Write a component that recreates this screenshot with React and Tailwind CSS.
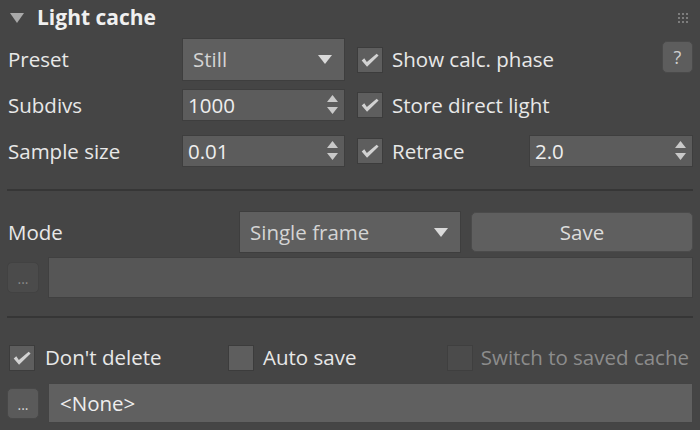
import React from "react"

// small pieces reused across the rollout
function Check({ checked = false, disabled = false }) {
    return (
        <div className={`w-[26px] h-[26px] shrink-0 flex items-center justify-center border ${disabled ? "bg-[#4b4b4b] border-[#3f3f3f]" : "bg-[#5e5e5e] border-[#3c3c3c]"}`}>
            {checked && (
                <svg width="26" height="26" viewBox="0 0 26 26">
                    <path d="M4 13.5 L6.8 11.2 L9.6 15.2 L20.2 6.2 L22.3 8.2 L9.8 20.2 Z" fill="#d2d2d2" />
                </svg>
            )}
        </div>
    )
}

function Spinner({ value, className }) {
    return (
        <div className={`flex items-center justify-between bg-[#5c5c5c] border border-[#3e3e3e] pl-[5px] pr-[6px] text-[#eeeeee] ${className}`}>
            <span>{value}</span>
            <svg width="11" height="20" viewBox="0 0 11 20">
                <path d="M5.5 0 L11 7 L0 7 Z" fill="#c9c9c9" />
                <path d="M0 12 L11 12 L5.5 19 Z" fill="#c9c9c9" />
            </svg>
        </div>
    )
}

function Dropdown({ value, className }) {
    return (
        <div className={`flex items-center justify-between bg-[#5f5f5f] border border-[#3e3e3e] pl-[10px] pr-[12px] text-[#d4d4d4] ${className}`}>
            <span>{value}</span>
            <svg width="14" height="9" viewBox="0 0 14 9">
                <path d="M0 0 L14 0 L7 9 Z" fill="#dadada" />
            </svg>
        </div>
    )
}

function Dots({ enabled }) {
    return (
        <div className={`w-[32px] h-[31px] shrink-0 rounded-[5px] border flex items-end justify-center pb-[6px] text-[14px] leading-none ${enabled ? "bg-[#5a5a5a] border-[#484848] text-[#d8d8d8]" : "bg-[#4b4b4b] border-[#424242] text-[#8a8a8a]"}`}>
            ...
        </div>
    )
}

export default function App() {
    return (
        <div className="w-[700px] h-[430px] overflow-hidden bg-[#454545] text-[#e8e8e8] text-[20.5px] leading-none px-[7px]" style={{ fontFamily: '"Open Sans", "Noto Sans", sans-serif' }}>
            {/* header */}
            <div className="h-[38px] flex items-center">
                <svg width="14" height="10" viewBox="0 0 14 10" className="ml-[3px] mb-[2px]">
                    <path d="M0 0 L14 0 L7 10 Z" fill="#a9a9a9" />
                </svg>
                <span className="ml-[13px] font-bold text-[21px] text-[#f0f0f0] mb-[3px]">Light cache</span>
                <div className="ml-auto mr-[5px] mb-[3px] grid grid-cols-3 gap-[2px]">
                    {Array.from({ length: 9 }).map((_, i) => (
                        <div key={i} className="w-[2px] h-[2px] bg-[#7d7d7d]" />
                    ))}
                </div>
            </div>

            {/* preset */}
            <div className="h-[43px] flex items-center">
                <span className="w-[175px] pl-[1px]">Preset</span>
                <Dropdown value="Still" className="w-[163px] h-[43px]" />
                <div className="ml-[12px] flex items-center">
                    <Check checked />
                    <span className="ml-[9px]">Show calc. phase</span>
                </div>
                <div className="ml-auto mt-[-6px] w-[31px] h-[32px] rounded-[5px] bg-[#5d5d5d] border border-[#4a4a4a] flex items-center justify-center text-[#cfcfcf] text-[18px]">?</div>
            </div>

            {/* subdivs */}
            <div className="h-[32px] mt-[8px] flex items-center">
                <span className="w-[175px] pl-[1px]">Subdivs</span>
                <Spinner value="1000" className="w-[163px] h-[32px]" />
                <div className="ml-[12px] flex items-center">
                    <Check checked />
                    <span className="ml-[9px]">Store direct light</span>
                </div>
            </div>

            {/* sample size */}
            <div className="h-[32px] mt-[14px] flex items-center">
                <span className="w-[175px] pl-[1px]">Sample size</span>
                <Spinner value="0.01" className="w-[163px] h-[32px]" />
                <div className="ml-[12px] flex items-center">
                    <Check checked />
                    <span className="ml-[9px]">Retrace</span>
                </div>
                <Spinner value="2.0" className="ml-auto w-[164px] h-[32px]" />
            </div>

            <div className="h-[2px] mt-[22px] bg-[#363636]" />

            {/* mode */}
            <div className="h-[42px] mt-[20px] flex items-center">
                <span className="w-[232px] pl-[1px]">Mode</span>
                <Dropdown value="Single frame" className="w-[222px] h-[42px]" />
                <div className="ml-[10px] flex-1 h-[40px] rounded-[5px] bg-[#5f5f5f] border border-[#4b4b4b] flex items-center justify-center text-[#dcdcdc]">Save</div>
            </div>

            <div className="h-[41px] mt-[4px] flex items-center">
                <Dots />
                <div className="ml-[9px] flex-1 h-[41px] bg-[#565656] border border-[#404040]" />
            </div>

            <div className="h-[2px] mt-[18px] bg-[#363636]" />

            {/* save options */}
            <div className="h-[27px] mt-[26px] flex items-center">
                <div className="ml-[2px] w-[219px] flex items-center">
                    <Check checked />
                    <span className="ml-[10px]">Don't delete</span>
                </div>
                <div className="flex items-center">
                    <Check />
                    <span className="ml-[9px]">Auto save</span>
                </div>
                <div className="ml-auto mr-[4px] flex items-center">
                    <Check disabled />
                    <span className="ml-[8px] text-[#8c8c8c]">Switch to saved cache</span>
                </div>
            </div>

            <div className="h-[40px] mt-[12px] flex items-center">
                <Dots enabled />
                <div className="ml-[9px] flex-1 h-[40px] bg-[#606060] border border-[#444444] flex items-center pl-[11px] text-[#eeeeee]">&lt;None&gt;</div>
            </div>
        </div>
    )
}
